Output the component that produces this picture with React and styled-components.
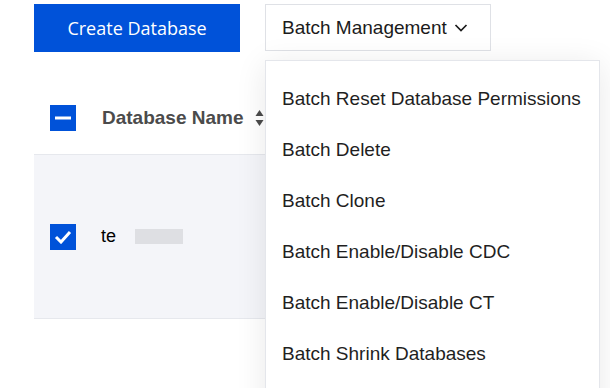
import React from 'react';
import styled, { createGlobalStyle } from 'styled-components';

const GlobalStyle = createGlobalStyle`
  html, body {
    margin: 0;
    padding: 0;
    background: #fff;
  }
  body {
    font-family: "Liberation Sans", Arial, sans-serif;
    overflow: hidden;
  }
`;

const Page = styled.div`
  width: 610px;
  height: 388px;
  padding: 4px 0 0 34px;
  box-sizing: border-box;
  overflow: hidden;
`;

const Toolbar = styled.div`
  display: flex;
  gap: 25px;
  align-items: flex-start;
`;

const PrimaryButton = styled.button`
  width: 206px;
  height: 48px;
  border: none;
  background: #0052d9;
  color: #fff;
  font-family: "Open Sans", sans-serif;
  font-size: 18px;
  padding: 0;
  cursor: pointer;
`;

const DropdownWrap = styled.div`
  position: relative;
  z-index: 2;
`;

const OutlineButton = styled.button`
  height: 47px;
  width: 226px;
  box-sizing: border-box;
  border: 1px solid #dfe1e6;
  background: #fff;
  color: #1b1b1b;
  font-family: "Liberation Sans", Arial, sans-serif;
  font-size: 19px;
  display: flex;
  align-items: center;
  gap: 7px;
  padding: 0 0 0 16px;
  cursor: pointer;
`;

const Menu = styled.ul`
  position: absolute;
  top: 56px;
  left: 0;
  width: 335px;
  margin: 0;
  padding: 12px 0 0;
  list-style: none;
  box-sizing: border-box;
  background: #fff;
  border: 1px solid #e4e6eb;
  box-shadow: 0 4px 30px rgba(0, 0, 0, 0.09);
  height: 360px;
`;

const MenuItem = styled.li`
  height: 51px;
  display: flex;
  align-items: center;
  padding-left: 16px;
  font-size: 19px;
  color: #1f1f1f;
`;

const Table = styled.div`
  margin-top: 30px;
  width: 560px;
`;

const HeaderRow = styled.div`
  height: 72px;
  display: flex;
  align-items: center;
  padding-left: 16px;
  border-bottom: 1px solid #e6e8ed;
`;

const BodyRow = styled.div`
  height: 163px;
  display: flex;
  align-items: center;
  padding-left: 16px;
  background: #f4f5f9;
  border-bottom: 1px solid #e6e8ed;
`;

const Check = styled.span`
  width: 26px;
  height: 26px;
  background: #0052d9;
  display: flex;
  align-items: center;
  justify-content: center;
  flex: none;
`;

const HeaderLabel = styled.span`
  margin-left: 26px;
  font-size: 19px;
  font-weight: bold;
  color: #4b4b4b;
  display: flex;
  align-items: center;
  gap: 11px;
`;

const CellText = styled.span`
  margin-left: 25px;
  font-size: 18px;
  color: #000;
  display: flex;
  align-items: center;
`;

const Redacted = styled.span`
  display: inline-block;
  width: 48px;
  height: 15px;
  margin-left: 19px;
  background: #dedfe3;
`;

const Chevron = () => (
  <svg width="14" height="14" viewBox="0 0 14 14" fill="none">
    <path d="M1.5 4L7 9.5L12.5 4" stroke="#1b1b1b" strokeWidth="1.7" />
  </svg>
);

const SortIcon = () => (
  <svg width="9" height="18" viewBox="0 0 9 18">
    <path d="M4.5 1L8.5 7H0.5Z" fill="#4b4b4b" />
    <path d="M4.5 17L8.5 11H0.5Z" fill="#4b4b4b" />
  </svg>
);

const items = [
  'Batch Reset Database Permissions',
  'Batch Delete',
  'Batch Clone',
  'Batch Enable/Disable CDC',
  'Batch Enable/Disable CT',
  'Batch Shrink Databases',
];

const App = () => (
  <Page>
    <GlobalStyle />
    <Toolbar>
      <PrimaryButton>Create Database</PrimaryButton>
      <DropdownWrap>
        <OutlineButton>
          Batch Management <Chevron />
        </OutlineButton>
        <Menu>
          {items.map((t) => (
            <MenuItem key={t}>{t}</MenuItem>
          ))}
        </Menu>
      </DropdownWrap>
    </Toolbar>
    <Table>
      <HeaderRow>
        <Check>
          <svg width="16" height="4" viewBox="0 0 16 4">
            <rect width="16" height="3" y="0.5" fill="#fff" />
          </svg>
        </Check>
        <HeaderLabel>
          Database Name <SortIcon />
        </HeaderLabel>
      </HeaderRow>
      <BodyRow>
        <Check>
          <svg width="18" height="14" viewBox="0 0 18 14" fill="none">
            <path d="M2 7L7 12L16 2" stroke="#fff" strokeWidth="3" />
          </svg>
        </Check>
        <CellText>
          te<Redacted />
        </CellText>
      </BodyRow>
    </Table>
  </Page>
);

export default App;
